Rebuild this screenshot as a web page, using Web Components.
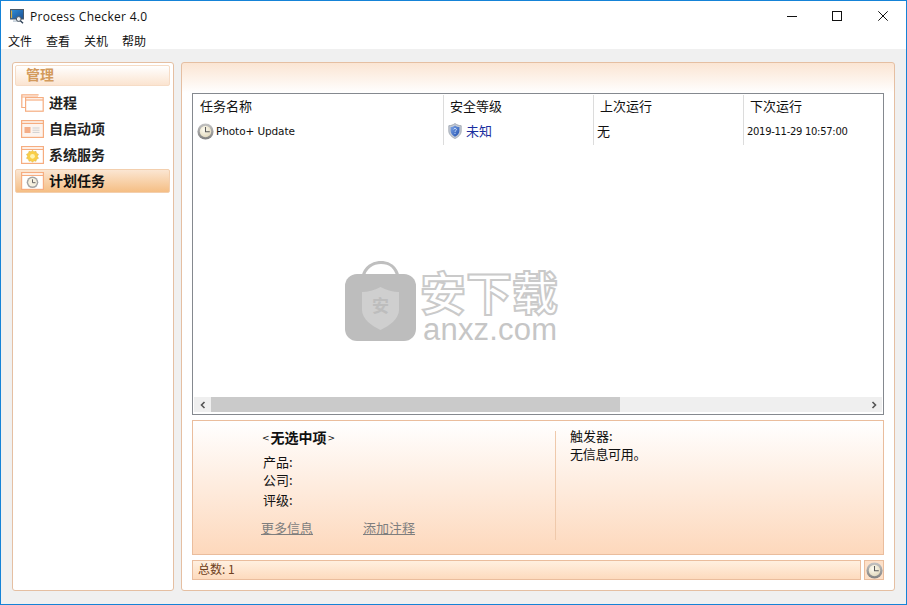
<!DOCTYPE html>
<html lang="zh"><head><meta charset="utf-8"><title>Process Checker 4.0</title>
<style>html,body{margin:0;padding:0;background:#f0f0f0}body{font:12px "Noto Sans CJK SC","Noto Sans",sans-serif}</style></head>
<body>
<app-window>
  <title-bar slot="top"></title-bar>
  <menu-bar slot="top"></menu-bar>
  <side-panel slot="left">
    <nav-item icon="proc">进程</nav-item>
    <nav-item icon="start">自启动项</nav-item>
    <nav-item icon="svc">系统服务</nav-item>
    <nav-item icon="task" selected>计划任务</nav-item>
  </side-panel>
  <main-panel slot="right">
    <task-table></task-table>
    <detail-panel></detail-panel>
    <status-bar></status-bar>
  </main-panel>
</app-window>
<script>
const CJK='"Noto Sans CJK SC","Noto Sans",sans-serif';
function el(name,html){customElements.define(name,class extends HTMLElement{constructor(){super();this.attachShadow({mode:'open'}).innerHTML=typeof html==='function'?html(this):html;}});}

el('clock-icon',h=>{const s=h.getAttribute('size')||16;return `<style>:host{display:block;width:${s}px;height:${s}px;flex:none}svg{display:block}</style>
<svg width="${s}" height="${s}" viewBox="0 0 16 16"><defs><radialGradient id="f" cx=".4" cy=".35" r=".8"><stop offset="0" stop-color="#fffdf2"/><stop offset="1" stop-color="#dcd2b4"/></radialGradient><linearGradient id="r" x1="0" y1="0" x2="0" y2="1"><stop offset="0" stop-color="#c4c4c4"/><stop offset="1" stop-color="#808080"/></linearGradient></defs>
<circle cx="8" cy="8" r="7.6" fill="url(#r)"/><circle cx="8" cy="8" r="5.4" fill="url(#f)"/><path d="M8 3.8V8.300H12" fill="none" stroke="#5a5a5a" stroke-width="1"/></svg>`});

el('shield-icon',`<style>:host{display:block;width:14px;height:16px;flex:none}svg{display:block}</style>
<svg width="14" height="16" viewBox="0 0 14 16"><defs><linearGradient id="s" x1="0" y1="0" x2="1" y2="1"><stop offset="0" stop-color="#7fa6e6"/><stop offset="1" stop-color="#2150b0"/></linearGradient></defs>
<path d="M7 .5C5 2 3 2.600.8 2.700V8C.8 11.500 4 14.200 7 15.500 10 14.200 13.200 11.500 13.200 8V2.700C11 2.600 9 2 7 .5Z" fill="#c5cbd4" stroke="#8f98a6" stroke-width=".7"/>
<path d="M7 2.400C5.600 3.400 4.200 3.900 2.600 4V8C2.600 10.600 4.900 12.600 7 13.700 9.100 12.600 11.400 10.600 11.400 8V4C9.800 3.900 8.400 3.400 7 2.400Z" fill="url(#s)"/>
<path d="M5.500 6.400C5.600 5.300 8.500 5 8.500 6.600 8.500 7.600 7 7.700 7 8.800M7 9.900V10.900" fill="none" stroke="#cfe0fa" stroke-width="1"/></svg>`);

el('app-window',`<style>:host{display:flex;flex-direction:column;box-sizing:border-box;width:907px;height:605px;border:1px solid #1583d7;background:#f0f0f0;overflow:hidden}
.body{flex:1;display:flex;gap:7px;padding:13px 11px 12px 11px;min-height:0}</style>
<slot name="top"></slot><div class="body"><slot name="left"></slot><slot name="right"></slot></div>`);

el('title-bar',`<style>:host{display:flex;align-items:center;height:29px;background:#fff;flex:none}
svg{display:block}.ic{margin-left:9px;margin-top:1px}
.t{margin-left:6px;flex:1;font:12px "Open Sans",sans-serif;color:#111;letter-spacing:.3px;margin-top:1px}
.b{width:46px;display:flex;justify-content:center}.m{width:44px;padding-left:2px}</style>
<svg class="ic" width="14" height="15" viewBox="0 0 14 15"><defs><linearGradient id="m" x1="0" y1="0" x2="1" y2="1"><stop offset="0" stop-color="#2f8fdc"/><stop offset="1" stop-color="#1c4f90"/></linearGradient></defs>
<rect x=".5" y=".5" width="13" height="9.500" fill="url(#m)" stroke="#4a5a6a"/><path d="M1.600 1.500V9" stroke="#e8b43c"/><path d="M3 11.200H10V13H3Z" fill="#c9d3dc"/><circle cx="8.700" cy="10" r="2.400" fill="#e9eef3" stroke="#4b5560"/><path d="M10.400 11.800 13 14.300" stroke="#2b3f56" stroke-width="1.400"/></svg>
<div class="t">Process Checker 4.0</div>
<div class="b m"><svg width="10" height="10" viewBox="0 0 10 10"><path d="M0 5.500H10" stroke="#111"/></svg></div>
<div class="b"><svg width="10" height="10" viewBox="0 0 10 10"><rect x=".5" y=".5" width="9" height="9" fill="none" stroke="#111"/></svg></div>
<div class="b"><svg width="10" height="10" viewBox="0 0 10 10"><path d="M.3.3 9.700 9.700M9.700.3.3 9.700" stroke="#111" fill="none"/></svg></div>`);

el('menu-bar',`<style>:host{display:flex;gap:14px;height:19px;padding:0 0 0 7px;background:#fff;flex:none;font:12px/19px ${CJK};color:#111;overflow:hidden}span{display:block;margin-top:1px}</style>
<span>文件</span><span>查看</span><span>关机</span><span>帮助</span>`);

el('side-panel',`<style>:host{display:flex;flex-direction:column;box-sizing:border-box;width:162px;height:529px;background:#fff;border:1px solid #e5bfa2;border-radius:3px;padding:2px 3px 2px 2px}
.h{box-sizing:border-box;height:21px;border:1px solid #f6dcc6;border-radius:2px;background:linear-gradient(#fff,#fbe4d0);font:bold 14px/17px ${CJK};color:#d39a5c;padding-left:10px;margin:0 0 4px 0}
.l{display:flex;flex-direction:column}</style>
<div class="h">管理</div><div class="l"><slot></slot></div>`);

const stroke='#f6ad80';
const nav={
 proc:`<svg width="23" height="18" viewBox="0 0 23 18"><path d="M17 1.500V.8H.8V13.500H4" fill="none" stroke="${stroke}" stroke-width="1.200"/><path d="M.8 3H17" stroke="${stroke}"/><rect x="4.600" y="3.600" width="17.600" height="13.600" fill="#fff" stroke="${stroke}" stroke-width="1.200"/><path d="M4.600 6H22" stroke="${stroke}" stroke-width="1.200"/></svg>`,
 start:`<svg width="23" height="18" viewBox="0 0 23 18"><rect x=".6" y=".6" width="21.800" height="16.800" fill="#fdf4ee" stroke="${stroke}" stroke-width="1.200"/><path d="M.6 3.400H22" stroke="${stroke}" stroke-width="1.200"/><rect x="3.500" y="7" width="6" height="6" fill="#f4ae88"/><path d="M11.500 8H18.500M11.500 10.200H18.500M11.500 12.400H18.500" stroke="#cfcfcf"/></svg>`,
 svc:`<svg width="23" height="18" viewBox="0 0 23 18"><rect x=".6" y=".6" width="21.800" height="16.800" fill="#fff" stroke="${stroke}" stroke-width="1.200"/><path d="M.6 3.400H22" stroke="${stroke}" stroke-width="1.200"/><g transform="translate(11.500 10.300)"><path d="M0-6 1.500-4.500 3.500-5 4-3 6-2 4.800 0 6 2 4 3 3.500 5 1.500 4.500 0 6-1.500 4.500-3.500 5-4 3-6 2-4.800 0-6-2-4-3-3.500-5-1.500-4.500Z" fill="#f9cf48" stroke="#dcae3e" stroke-width=".5"/><circle r="2.400" fill="#fff3b0"/></g></svg>`,
 task:`<svg width="23" height="18" viewBox="0 0 23 18"><rect x=".6" y=".6" width="21.800" height="16.800" fill="#fff" stroke="${stroke}" stroke-width="1.200"/><path d="M.6 3.400H22" stroke="${stroke}" stroke-width="1.200"/><g transform="translate(11.500 10.300)"><circle r="5.800" fill="#a4a4a4"/><circle r="4.300" fill="#f6f1df"/><path d="M0-3V.4H3" fill="none" stroke="#666"/></g></svg>`};
el('nav-item',h=>{const sel=h.hasAttribute('selected');return `<style>:host{display:flex;align-items:center;box-sizing:border-box;height:26px;padding-left:5px;gap:5px;font:bold 14px/22px ${CJK};color:#222;border:1px solid ${sel?'#f3cfae':'transparent'};border-radius:2px;${sel?'height:24px;margin-top:1px;background:linear-gradient(#fbe6d2,#f5be84);color:#111;':''}}svg{display:block}span{margin-top:-2px}</style>${nav[h.getAttribute('icon')]}<span><slot></slot></span>`});

el('main-panel',`<style>:host{display:flex;flex-direction:column;gap:5px;box-sizing:border-box;width:714px;height:529px;border:1px solid #e5bfa2;border-radius:3px;padding:30px 10px 10px;background:linear-gradient(#fbe5d3 0,#fff 30px,#fff 100%)}</style><slot></slot>`);

el('task-table',`<style>:host{display:flex;flex-direction:column;position:relative;box-sizing:border-box;height:322px;flex:none;background:#fff;border:1px solid #85898f;padding:1px}
.r{display:grid;grid-template-columns:250px 150px 150px 140px;height:25px}
.c{display:flex;align-items:center;border-right:1px solid #dcdcdc;overflow:hidden;white-space:nowrap;color:#111;box-sizing:border-box}
.c:last-child{border-right:0}
.hd .c{font:13px/21px ${CJK};padding:0 0 4px 6px}
.bd .c{font:13px/21px ${CJK};padding:0 0 3px 3px}
.bd .en,.en{font:10.5px/21px "DejaVu Sans",sans-serif;letter-spacing:-.1px}
.bd .dt{font:10px/21px "DejaVu Sans",sans-serif;letter-spacing:-.3px}
.up{margin-bottom:2px}
.blue{color:#1a2fa0}
.sp{flex:1}
.sb{display:flex;height:15px;margin:0 0 1px 0;background:#efefef;flex:none}
.arr{width:17px;display:flex;align-items:center;justify-content:center;flex:none}
.th{width:409px;background:#cacaca}.tr{flex:1}
water-mark{position:absolute;left:152px;top:167px}</style>
<div class="r hd"><div class="c">任务名称</div><div class="c">安全等级</div><div class="c">上次运行</div><div class="c">下次运行</div></div>
<div class="r bd"><div class="c"><clock-icon size="17"></clock-icon><span class="en" style="margin-left:2px">Photo+ Update</span></div>
<div class="c" style="padding-left:4px"><shield-icon></shield-icon><span class="blue up" style="margin-left:4px">未知</span></div>
<div class="c"><span class="up">无</span></div><div class="c dt">2019-11-29 10:57:00</div></div>
<div class="sp"></div>
<div class="sb"><div class="arr"><svg width="8" height="8" viewBox="0 0 8 8"><path d="M5.500 1 2.500 4 5.500 7" fill="none" stroke="#555" stroke-width="1.600"/></svg></div><div class="th"></div><div class="tr"></div><div class="arr"><svg width="8" height="8" viewBox="0 0 8 8"><path d="M2.500 1 5.500 4 2.500 7" fill="none" stroke="#555" stroke-width="1.600"/></svg></div></div>
<water-mark></water-mark>`);

el('water-mark',`<style>:host{display:flex;gap:4px;width:220px;height:80px;pointer-events:none}
.bag{position:relative;width:71px;height:80px;flex:none}svg{display:block}
.z{position:absolute;left:25px;top:34px;font:bold 17px/20px ${CJK};color:#bdbdbd;width:21px;text-align:center}
.w{display:flex;flex-direction:column;align-items:flex-start}
.cn{font:bold 46px/46px ${CJK};margin-top:6px;color:#fff;-webkit-text-stroke:2px #cacaca;white-space:nowrap;height:46px}
.en{font:31px/26px "Liberation Sans",sans-serif;color:#c6c6c6;margin:4px 0 0 3px;letter-spacing:.2px}</style>
<div class="bag"><svg width="71" height="80" viewBox="0 0 71 80"><path d="M18 16C20 6 28 1.500 36 1.500S51 6 53 16" fill="none" stroke="#bfbfbf" stroke-width="3.200"/><rect x="0" y="13" width="71" height="67" rx="12" fill="#bdbdbd"/><path d="M35.500 26C29 29.500 23 31 17 31V49C17 58 27 65 35.500 69 44 65 54 58 54 49V31C48 31 42 29.500 35.500 26Z" fill="#cfcfcf"/></svg><div class="z">安</div></div>
<div class="w"><div class="cn">安下载</div><div class="en">anxz.com</div></div>`);

el('detail-panel',`<style>:host{display:flex;box-sizing:border-box;height:135px;flex:none;border:1px solid #eabd9d;background:linear-gradient(#fff,#fdd8bc);font:13px/18px ${CJK};color:#111}
.a{width:362px;box-sizing:border-box;padding:7px 0 0 69px;flex:none}
.n{font-weight:bold;font-size:14px;height:25px;display:flex;align-items:flex-start;gap:1px}
.n i{font:normal 9px/20px "DejaVu Sans",sans-serif}
.f{padding-left:1px;height:18px}
.g{margin-top:2px}
.ls{display:flex;gap:50px;margin:9.500px 0 0 -1px}
a{color:#7e7e7e;text-decoration:underline}
.d{width:1px;background:#efc9ab;margin:10px 0 14px;flex:none}
.b{padding:6px 0 0 14px}.sm{letter-spacing:-.3px}</style>
<div class="a"><div class="n"><i>&lt;</i><span>无选中项</span><i>&gt;</i></div><div class="f">产品:</div><div class="f">公司:</div><div class="f g">评级:</div><div class="ls"><a>更多信息</a><a>添加注释</a></div></div>
<div class="d"></div>
<div class="b"><div>触发器:</div><div class="sm">无信息可用。</div></div>`);

el('status-bar',`<style>:host{display:flex;gap:3px;height:20px;flex:none}
.s{flex:1;box-sizing:border-box;border:1px solid #eabd9d;background:linear-gradient(#fff0e0,#fddabd);font:12px/16px ${CJK};color:#6e4020;padding-left:5px}
.c{box-sizing:border-box;width:20px;border:1px solid #eabd9d;background:#fde0c8;display:flex;align-items:center;justify-content:center}</style>
<div class="s">总数: 1</div><div class="c"><clock-icon size="17"></clock-icon></div>`);
</script>
</body></html>
